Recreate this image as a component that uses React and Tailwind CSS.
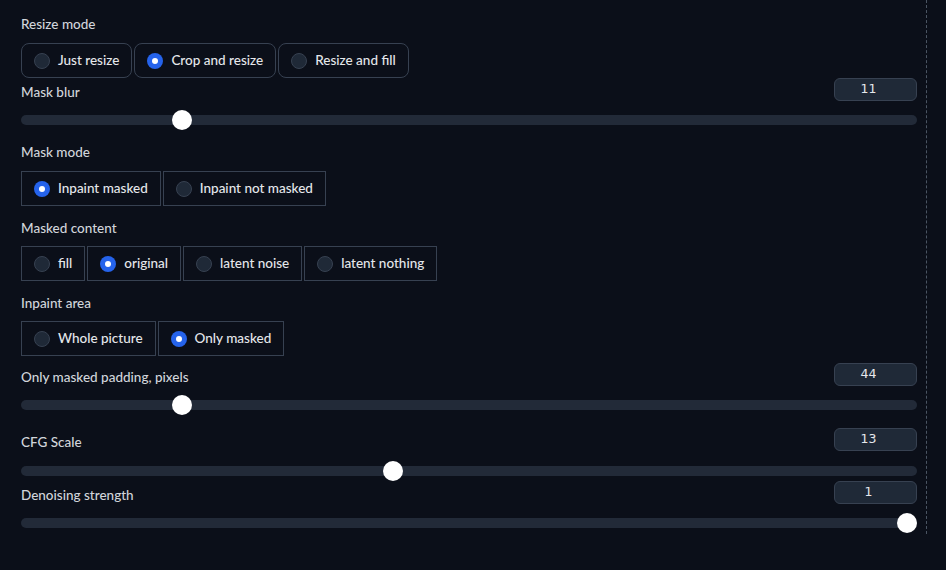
import React from "react";

const font = { fontFamily: "Lato, 'Noto Sans', sans-serif" };

function Radio({ checked }) {
    return checked ? (
        <span className="flex h-4 w-4 items-center justify-center rounded-full bg-[#2563eb]">
            <span className="h-[6px] w-[6px] rounded-full bg-white" />
        </span>
    ) : (
        <span className="h-4 w-4 rounded-full border border-[#374151] bg-[#1f2937]" />
    );
}

function RadioGroup({ label, options, value, rounded = false, labelClass = "" }) {
    return (
        <>
            {label && (
                <div className={`h-5 pt-px leading-5 text-[13.5px] font-medium text-[#d1d5db] ${labelClass}`}>{label}</div>
            )}
            <div className={`flex gap-[2px] ${label ? "mt-[10px]" : ""}`}>
                {options.map((opt) => (
                    <label
                        key={opt}
                        className={`flex h-[35px] items-center gap-2 border border-[#374151] pl-3 pr-3 text-[13.5px] font-medium text-[#e5e7eb] ${
                            rounded ? "rounded-lg" : ""
                        }`}
                    >
                        <Radio checked={opt === value} />
                        <span>{opt}</span>
                    </label>
                ))}
            </div>
        </>
    );
}

function Slider({ label, value, min, max, headerClass = "", trackClass = "" }) {
    const pct = (value - min) / (max - min);
    return (
        <>
            <div className={`flex h-[23px] items-center justify-between ${headerClass}`}>
                <span className="pt-[5px] text-[13.5px] font-medium text-[#d1d5db]">{label}</span>
                <div
                    className="flex h-[23px] w-[83px] items-center justify-center rounded-md border border-[#374151] bg-[#1f2937] pr-[14px] text-[12.5px] text-[#e5e7eb]"
                    style={{ fontFamily: "'DejaVu Sans', sans-serif" }}
                >
                    {value}
                </div>
            </div>
            <div className={`relative h-[10px] rounded-full bg-[#222a38] ${trackClass}`}>
                <div
                    className="absolute top-1/2 h-5 w-5 -translate-x-1/2 -translate-y-1/2 rounded-full bg-white"
                    style={{ left: `calc(10px + (100% - 20px) * ${pct})` }}
                />
            </div>
        </>
    );
}

export default function App() {
    return (
        <div className="h-[570px] w-[946px] overflow-hidden bg-[#0b0f19]" style={font}>
            <div className="w-[927px] border-r border-dashed border-[#4b5563] pb-[6px] pl-[21px] pr-[9px] pt-[13px]">
                <RadioGroup
                    label="Resize mode"
                    options={["Just resize", "Crop and resize", "Resize and fill"]}
                    value="Crop and resize"
                    rounded
                />
                <Slider label="Mask blur" value={11} min={0} max={64} trackClass="mt-[14px]" />

                <div className="mt-[16px]" />
                <RadioGroup
                    label="Mask mode"
                    options={["Inpaint masked", "Inpaint not masked"]}
                    value="Inpaint masked"
                />

                <div className="mt-[11px]" />
                <RadioGroup
                    label="Masked content"
                    options={["fill", "original", "latent noise", "latent nothing"]}
                    value="original"
                    labelClass="-mb-px"
                />

                <div className="mt-[11px]" />
                <RadioGroup
                    label="Inpaint area"
                    options={["Whole picture", "Only masked"]}
                    value="Only masked"
                    labelClass="-mb-px"
                />

                <Slider
                    label="Only masked padding, pixels"
                    value={44}
                    min={0}
                    max={256}
                    headerClass="mt-[7px]"
                    trackClass="mt-[14px]"
                />
                <Slider label="CFG Scale" value={13} min={1} max={30} headerClass="mt-[18px]" trackClass="mt-[15px]" />
                <Slider
                    label="Denoising strength"
                    value={1}
                    min={0}
                    max={1}
                    headerClass="mt-[5px]"
                    trackClass="mt-[14px]"
                />
            </div>
        </div>
    );
}
